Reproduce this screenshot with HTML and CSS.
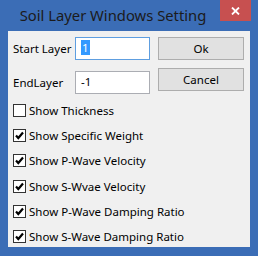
FILE: index.html
```html
<!DOCTYPE html>
<html lang="en">
<head>
    <meta charset="UTF-8">
    <meta name="viewport" content="width=device-width, initial-scale=1.0">
    <title>Soil Layer Windows Setting</title>
    <link rel="stylesheet" href="styles.css">
</head>
<body>
    <div class="window">
        <div class="title-bar">
            <div class="title">Soil Layer Windows Setting</div>
            <button class="close-btn" aria-label="Close">
                <svg width="9" height="8" viewBox="0 0 9 8">
                    <path d="M1 0.5 L8 7.5 M8 0.5 L1 7.5" stroke="#fff" stroke-width="1.8" fill="none"/>
                </svg>
            </button>
        </div>

        <div class="client">
            <div class="top">
                <div class="fields">
                    <div class="field">
                        <label for="start-layer">Start Layer</label>
                        <div class="text-input focused" id="start-layer"><span class="selected">1</span></div>
                    </div>
                    <div class="field">
                        <label for="end-layer">EndLayer</label>
                        <div class="text-input" id="end-layer">-1</div>
                    </div>
                </div>
                <div class="buttons">
                    <button class="btn">Ok</button>
                    <button class="btn">Cancel</button>
                </div>
            </div>

            <div class="options">
                <div class="option"><span class="check"></span>Show Thickness</div>
                <div class="option"><span class="check checked"></span>Show Specific Weight</div>
                <div class="option"><span class="check checked"></span>Show P-Wave Velocity</div>
                <div class="option"><span class="check checked"></span>Show S-Wvae Velocity</div>
                <div class="option"><span class="check checked"></span>Show P-Wave Damping Ratio</div>
                <div class="option"><span class="check checked"></span>Show S-Wave Damping Ratio</div>
            </div>
        </div>
    </div>
</body>
</html>
```

FILE: styles.css
```css
body {
    margin: 0;
    font-family: "Noto Sans", "Open Sans", sans-serif;
    font-size: 11.5px;
    color: #000;
}
.window {
    width: 258px;
    height: 256px;
    box-sizing: border-box;
    background-color: #3b6db6;
    padding: 0 8px 8px;
}
.title-bar {
    display: flex;
    height: 31px;
    margin: 0 -8px;
}
.title {
    flex: 1;
    text-align: center;
    padding-left: 6px;
    font-size: 14.8px;
    line-height: 30px;
    color: #1b1b1b;
}
.close-btn {
    width: 31px;
    height: 21px;
    margin-right: 7px;
    border: none;
    padding: 0;
    background-color: #c75050;
    display: flex;
    align-items: center;
    justify-content: center;
}
.client {
    height: 216px;
    background-color: #f0f0f0;
    padding: 6px 6px 0 5px;
    box-sizing: border-box;
}
.top {
    display: flex;
}
.fields {
    display: flex;
    flex-direction: column;
    gap: 11px;
}
.field {
    display: flex;
    align-items: center;
}
.field label {
    width: 62px;
}
.text-input {
    width: 75px;
    height: 23px;
    box-sizing: border-box;
    border: 1px solid #abadb3;
    background-color: #fff;
    padding-left: 5px;
    line-height: 20px;
}
.text-input.focused {
    border-color: #5e9ee0;
}
.selected {
    display: inline-block;
    background-color: #3399ff;
    color: #fff;
    line-height: 15px;
    padding: 0 1px;
}
.buttons {
    display: flex;
    flex-direction: column;
    gap: 8px;
    margin-left: 8px;
}
.btn {
    width: 86px;
    height: 23px;
    border: 1px solid #adadad;
    background-color: #e1e1e1;
    font-family: inherit;
    font-size: 11.5px;
    color: #000;
    padding: 0;
}
.options {
    margin-top: 10px;
}
.option {
    display: flex;
    height: 25.2px;
    align-items: flex-start;
    line-height: 13px;
}
.check {
    width: 13px;
    height: 13px;
    box-sizing: border-box;
    border: 1px solid #333;
    background-color: #fff;
    margin-right: 3px;
    flex: none;
}
.check.checked {
    background-image: url("data:image/svg+xml,%3Csvg xmlns='http://www.w3.org/2000/svg' width='11' height='11'%3E%3Cpath d='M2 5.5 L4.3 8 L9 2.5' stroke='black' stroke-width='2.2' fill='none'/%3E%3C/svg%3E");
    background-repeat: no-repeat;
}
```
